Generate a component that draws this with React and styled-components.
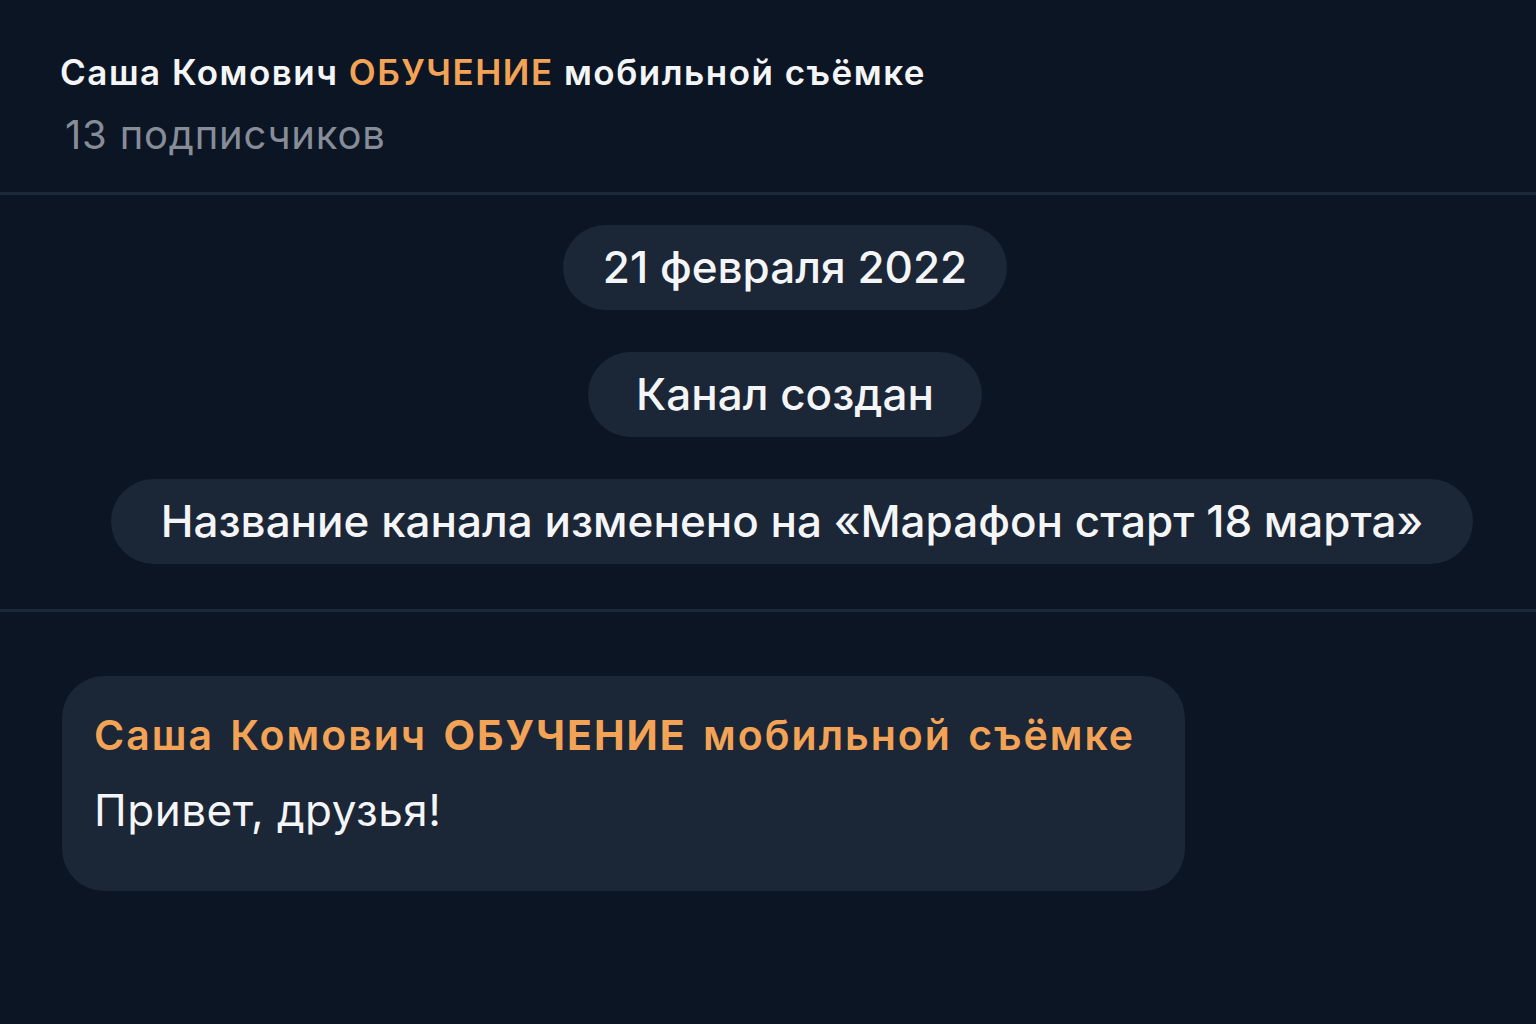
import React from "react";
import styled, { createGlobalStyle } from "styled-components";

const Global = createGlobalStyle`
  html, body { margin: 0; padding: 0; background: #0c1524; }
  body { font-family: "Inter", "Roboto", "Noto Sans", sans-serif; -webkit-font-smoothing: antialiased; }
`;

const Page = styled.div`
  width: 1536px;
  height: 1024px;
  background: #0c1524;
  display: flex;
  flex-direction: column;
  overflow: hidden;
`;

const Header = styled.header`
  flex-shrink: 0;
  height: 192px;
  box-sizing: border-box;
  padding: 50px 0 0 60px;
  display: flex;
  flex-direction: column;
  gap: 18px;
`;

const Title = styled.div`
  font-size: 35px;
  font-weight: 600;
  color: #f4f5f7;
  letter-spacing: 1.5px;
  line-height: 44px;
  white-space: nowrap;
`;

const Accent = styled.span`
  color: ${p => p.$color || "#f3a355"};
  font-weight: ${p => p.$weight || "inherit"};
`;

const Subtitle = styled.div`
  font-size: 40px;
  font-weight: 400;
  color: #868d98;
  line-height: 46px;
  padding-left: 5px;
  letter-spacing: 0.8px;
`;

const Divider = styled.div`
  height: 3px;
  background: #1c2839;
  flex-shrink: 0;
`;

const ServiceArea = styled.section`
  flex-shrink: 0;
  display: flex;
  flex-direction: column;
  align-items: center;
  gap: 42px;
  padding: 30px 0 45px 34px;
`;

const Pill = styled.div`
  background: #1b2637;
  color: #f4f5f7;
  font-size: 44px;
  font-weight: 500;
  line-height: 85px;
  height: 85px;
  border-radius: 43px;
  padding: 0 ${p => p.$pad || 40}px;
  margin-left: ${p => p.$shift || 0}px;
  white-space: nowrap;
`;

const Feed = styled.section`
  flex-shrink: 0;
  padding: 64px 0 0 62px;
`;

const Bubble = styled.div`
  width: 1123px;
  height: 215px;
  box-sizing: border-box;
  background: #1b2637;
  border-radius: 42px;
  padding: 30px 32px 0;
  display: flex;
  flex-direction: column;
  gap: 20px;
`;

const Author = styled.div`
  color: #f3a355;
  font-size: 41px;
  font-weight: 600;
  line-height: 58px;
  letter-spacing: 2px;
  word-spacing: 4px;
  white-space: nowrap;
`;

const Text = styled.div`
  color: #f4f5f7;
  font-size: 44px;
  font-weight: 400;
  line-height: 52px;
  letter-spacing: 0.5px;
`;

export default function App() {
  return (
    <Page>
      <Global />
      <Header>
        <Title>
          Саша Комович <Accent>ОБУЧЕНИЕ</Accent> мобильной съёмке
        </Title>
        <Subtitle>13 подписчиков</Subtitle>
      </Header>
      <Divider />
      <ServiceArea>
        <Pill $pad={40}>21 февраля 2022</Pill>
        <Pill $pad={48}>Канал создан</Pill>
        <Pill $pad={50} $shift={14}>Название канала изменено на «Марафон старт 18 марта»</Pill>
      </ServiceArea>
      <Divider />
      <Feed>
        <Bubble>
          <Author>
            Саша Комович <Accent $weight={700}>ОБУЧЕНИЕ</Accent> мобильной съёмке
          </Author>
          <Text>Привет, друзья!</Text>
        </Bubble>
      </Feed>
    </Page>
  );
}
